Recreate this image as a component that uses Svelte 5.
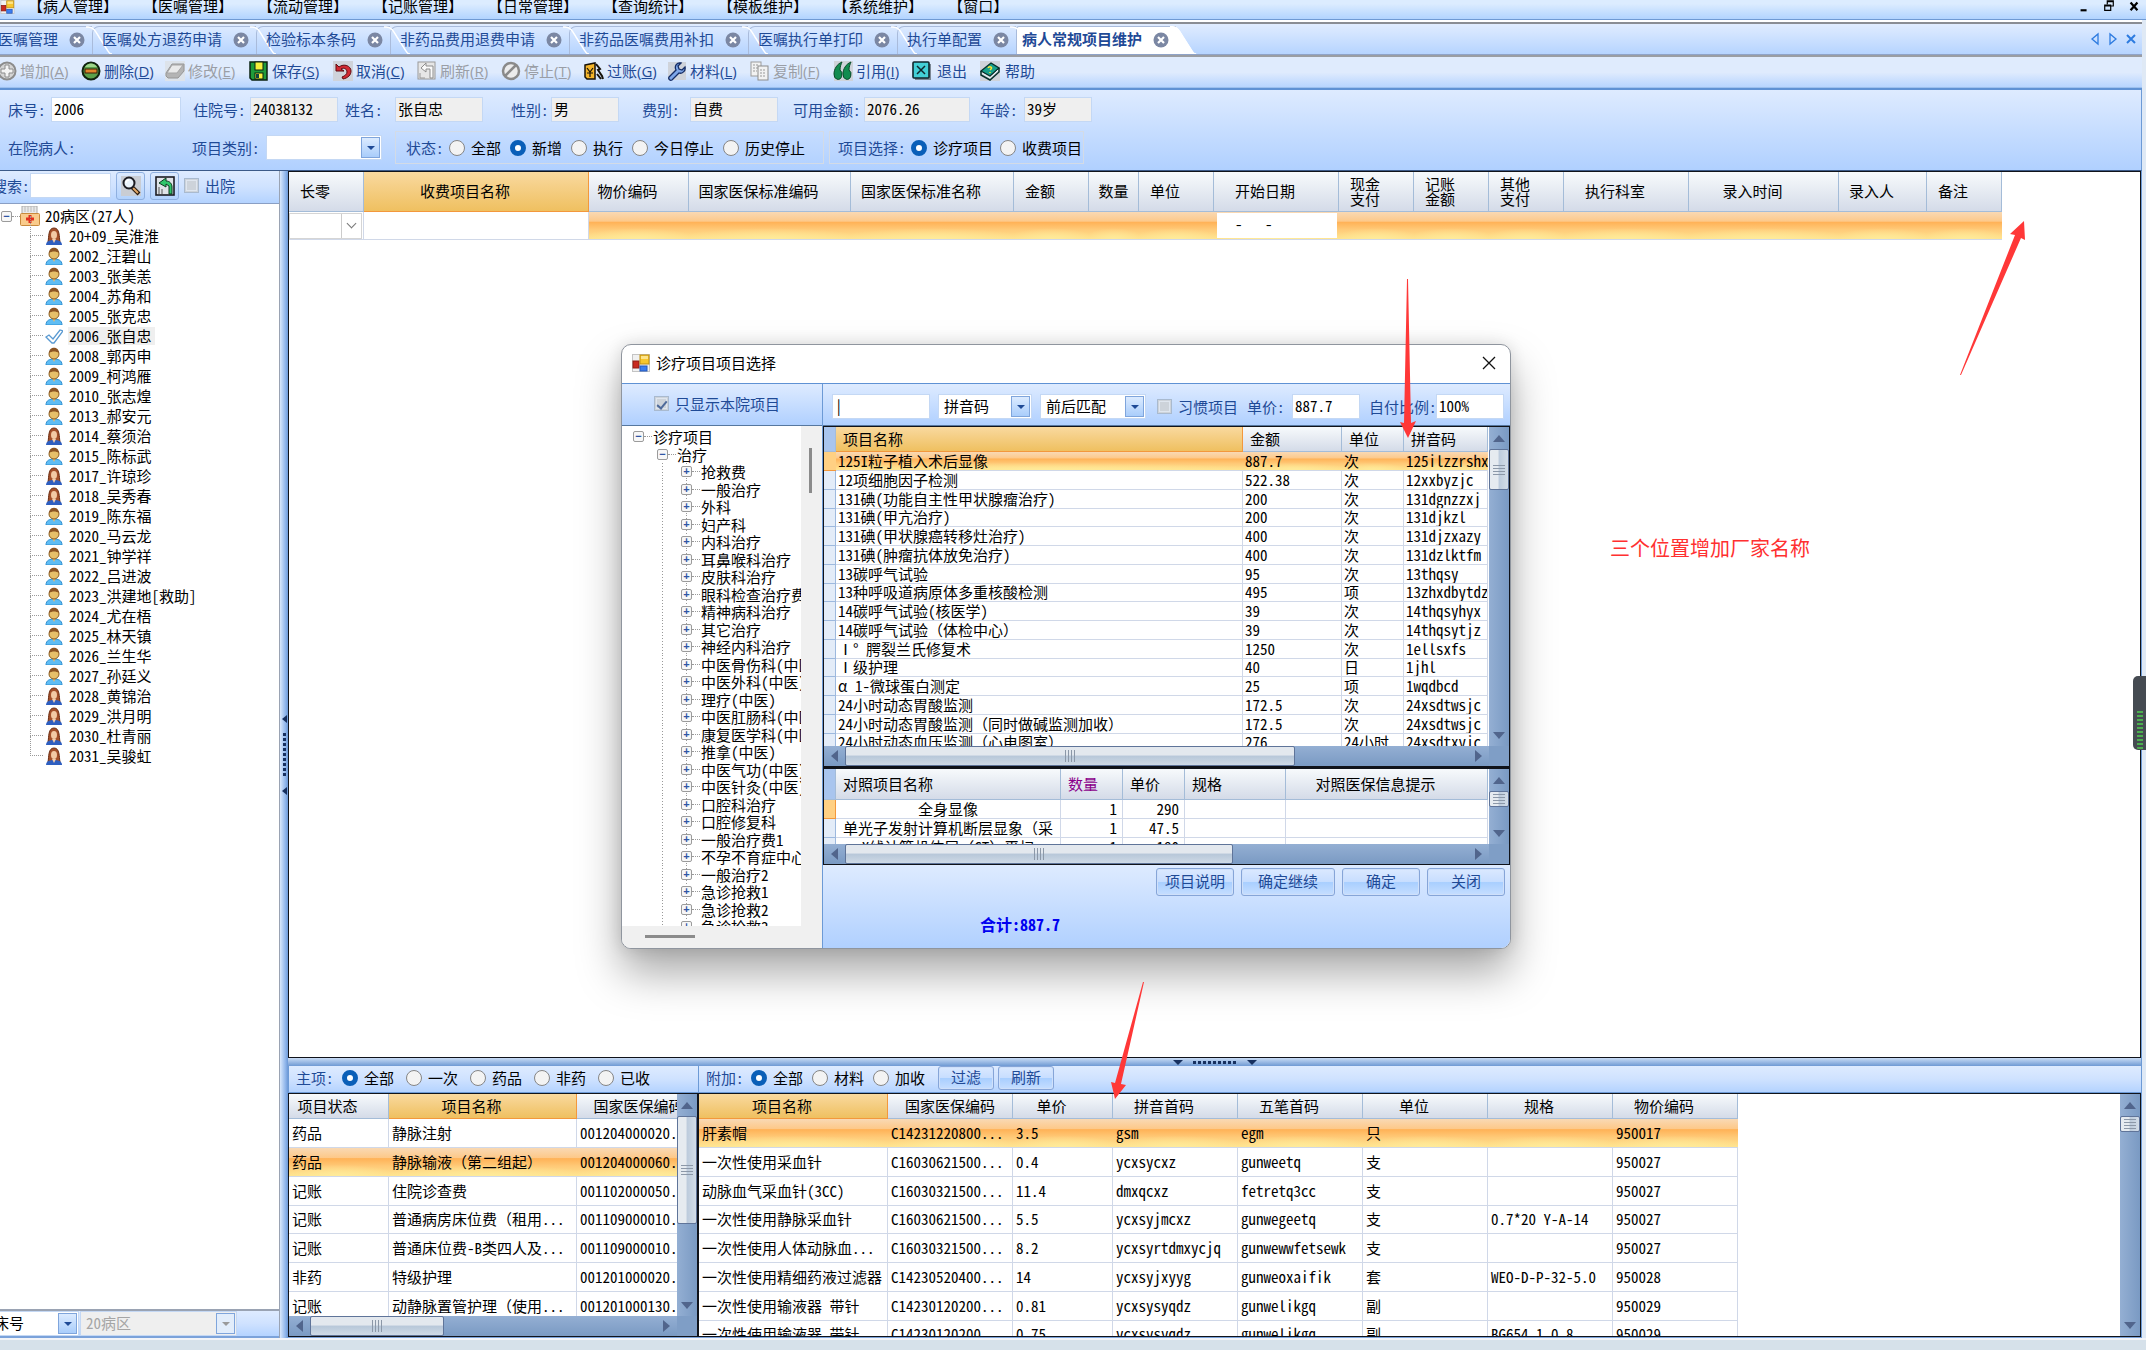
<script lang="ts">
	interface Column {
		title: string;
		width: number;
		align?: string;
		active?: boolean;
	}

	const menus = ['病人管理', '医嘱管理', '流动管理', '记账管理', '日常管理', '查询统计', '模板维护', '系统维护', '窗口'];

	const tabs = [
		'医嘱管理',
		'医嘱处方退药申请',
		'检验标本条码',
		'非药品费用退费申请',
		'非药品医嘱费用补扣',
		'医嘱执行单打印',
		'执行单配置',
		'病人常规项目维护'
	];
	let activeTab = $state('病人常规项目维护');

	const tools = [
		{ icon: 'add', text: '增加', key: 'A', disabled: true },
		{ icon: 'remove', text: '删除', key: 'D' },
		{ icon: 'edit', text: '修改', key: 'E', disabled: true },
		{ icon: 'save', text: '保存', key: 'S' },
		{ icon: 'undo', text: '取消', key: 'C' },
		{ icon: 'refresh', text: '刷新', key: 'R', disabled: true },
		{ icon: 'stop', text: '停止', key: 'T', disabled: true },
		{ icon: 'post', text: '过账', key: 'G' },
		{ icon: 'wrench', text: '材料', key: 'L' },
		{ icon: 'copy', text: '复制', key: 'F', disabled: true },
		{ icon: 'quote', text: '引用', key: 'I' },
		{ icon: 'exit', text: '退出' },
		{ icon: 'help', text: '帮助' }
	];

	const fields = [
		{ label: '床号:', value: '2006', size: 'xl' },
		{ label: '住院号:', value: '24038132', size: 'md', readonly: true },
		{ label: '姓名:', value: '张自忠', size: 'md', readonly: true },
		{ label: '性别:', value: '男', size: 'sm', readonly: true },
		{ label: '费别:', value: '自费', size: 'md', readonly: true },
		{ label: '可用金额:', value: '2076.26', size: 'lg', readonly: true },
		{ label: '年龄:', value: '39岁', size: 'sm', readonly: true }
	];

	// f = female, m = male, c = currently selected
	const patients = [
		['20+09_吴淮淮', 'f'],
		['2002_汪碧山', 'm'],
		['2003_张美恙', 'm'],
		['2004_苏角和', 'm'],
		['2005_张克忠', 'm'],
		['2006_张自忠', 'c'],
		['2008_郭丙申', 'm'],
		['2009_柯鸿雁', 'm'],
		['2010_张志煌', 'm'],
		['2013_郝安元', 'm'],
		['2014_蔡须治', 'f'],
		['2015_陈标武', 'm'],
		['2017_许琼珍', 'f'],
		['2018_吴秀春', 'f'],
		['2019_陈东福', 'm'],
		['2020_马云龙', 'm'],
		['2021_钟学祥', 'm'],
		['2022_吕进波', 'm'],
		['2023_洪建地[救助]', 'm'],
		['2024_尤在梧', 'm'],
		['2025_林天镇', 'm'],
		['2026_兰生华', 'm'],
		['2027_孙廷义', 'm'],
		['2028_黄锦治', 'f'],
		['2029_洪月明', 'f'],
		['2030_杜青丽', 'f'],
		['2031_吴骏虹', 'f']
	];

	const chargeColumns: Column[] = [
		{ title: '长零', width: 75 },
		{ title: '收费项目名称', width: 225, active: true },
		{ title: '物价编码', width: 100 },
		{ title: '国家医保标准编码', width: 162 },
		{ title: '国家医保标准名称', width: 163 },
		{ title: '金额', width: 75 },
		{ title: '数量', width: 50, align: 'tight' },
		{ title: '单位', width: 75 },
		{ title: '开始日期', width: 125 },
		{ title: '现金\n支付', width: 75 },
		{ title: '记账\n金额', width: 75 },
		{ title: '其他\n支付', width: 75 },
		{ title: '执行科室', width: 125 },
		{ title: '录入时间', width: 150 },
		{ title: '录入人', width: 88 },
		{ title: '备注', width: 75 }
	];

	const mainColumns: Column[] = [
		{ title: '项目状态', width: 100 },
		{ title: '项目名称', width: 188, active: true },
		{ title: '国家医保编码', width: 146 }
	];
	const mainRows = [
		['药品', '静脉注射', '001204000020...'],
		['药品', '静脉输液（第二组起）', '001204000060...'],
		['记账', '住院诊查费', '001102000050...'],
		['记账', '普通病房床位费（租用...', '001109000010...'],
		['记账', '普通床位费-B类四人及...', '001109000010...'],
		['非药', '特级护理', '001201000020...'],
		['记账', '动静脉置管护理（使用...', '001201000130...']
	];

	const extraColumns: Column[] = [
		{ title: '项目名称', width: 189, active: true },
		{ title: '国家医保编码', width: 125, align: 'tight' },
		{ title: '单价', width: 100 },
		{ title: '拼音首码', width: 125 },
		{ title: '五笔首码', width: 125 },
		{ title: '单位', width: 125 },
		{ title: '规格', width: 125 },
		{ title: '物价编码', width: 125 }
	];
	const extraRows = [
		['肝素帽', 'C14231220800...', '3.5', 'gsm', 'egm', '只', '', '950017'],
		['一次性使用采血针', 'C16030621500...', '0.4', 'ycxsycxz', 'gunweetq', '支', '', '950027'],
		['动脉血气采血针(3CC)', 'C16030321500...', '11.4', 'dmxqcxz', 'fetretq3cc', '支', '', '950027'],
		['一次性使用静脉采血针', 'C16030621500...', '5.5', 'ycxsyjmcxz', 'gunwegeetq', '支', '0.7*20 Y-A-14', '950027'],
		['一次性使用人体动脉血...', 'C16030321500...', '8.2', 'ycxsyrtdmxycjq', 'gunwewwfetsewk', '支', '', '950027'],
		['一次性使用精细药液过滤器', 'C14230520400...', '14', 'ycxsyjxyyg', 'gunweoxaifik', '套', 'WEO-D-P-32-5.0', '950028'],
		['一次性使用输液器 带针', 'C14230120200...', '0.81', 'ycxsysyqdz', 'gunwelikgq', '副', '', '950029'],
		['一次性使用输液器 带针', 'C14230120200...', '0.75', 'ycxsysyqdz', 'gunwelikgq', '副', 'BG654 1.0 8', '950029']
	];

	const categories = [
		'抢救费', '一般治疗', '外科', '妇产科', '内科治疗', '耳鼻喉科治疗', '皮肤科治疗', '眼科检查治疗费',
		'精神病科治疗', '其它治疗', '神经内科治疗', '中医骨伤科(中医)', '中医外科(中医)', '理疗(中医)',
		'中医肛肠科(中医)', '康复医学科(中医)', '推拿(中医)', '中医气功(中医)', '中医针灸(中医)', '口腔科治疗',
		'口腔修复科', '一般治疗费1', '不孕不育症中心', '一般治疗2', '急诊抢救1', '急诊抢救2', '急诊抢救3'
	];

	const itemColumns: Column[] = [
		{ title: '', width: 12, align: 'select' },
		{ title: '项目名称', width: 407, align: 'left', active: true },
		{ title: '金额', width: 99, align: 'left' },
		{ title: '单位', width: 62, align: 'left' },
		{ title: '拼音码', width: 84, align: 'left' }
	];
	const itemRows = [
		['', '125I粒子植入术后显像', '887.7', '次', '125ilzzrshx'],
		['', '12项细胞因子检测', '522.38', '次', '12xxbyzjc'],
		['', '131碘(功能自主性甲状腺瘤治疗)', '200', '次', '131dgnzzxj'],
		['', '131碘(甲亢治疗)', '200', '次', '131djkzl'],
		['', '131碘(甲状腺癌转移灶治疗)', '400', '次', '131djzxazy'],
		['', '131碘(肿瘤抗体放免治疗)', '400', '次', '131dzlktfm'],
		['', '13碳呼气试验', '95', '次', '13thqsy'],
		['', '13种呼吸道病原体多重核酸检测', '495', '项', '13zhxdbytdz'],
		['', '14碳呼气试验(核医学)', '39', '次', '14thqsyhyx'],
		['', '14碳呼气试验（体检中心）', '39', '次', '14thqsytjz'],
		['', 'Ⅰ° 腭裂兰氏修复术', '1250', '次', '1ellsxfs'],
		['', 'Ⅰ级护理', '40', '日', '1jhl'],
		['', 'α 1-微球蛋白测定', '25', '项', '1wqdbcd'],
		['', '24小时动态胃酸监测', '172.5', '次', '24xsdtwsjc'],
		['', '24小时动态胃酸监测（同时做碱监测加收）', '172.5', '次', '24xsdtwsjc'],
		['', '24小时动态血压监测（心电图室）', '276', '24小时', '24xsdtxyjc']
	];

	const compareColumns: Column[] = [
		{ title: '', width: 12, align: 'select' },
		{ title: '对照项目名称', width: 225, align: 'left' },
		{ title: '数量', width: 62, align: 'left' },
		{ title: '单价', width: 62, align: 'left' },
		{ title: '规格', width: 101, align: 'left' },
		{ title: '对照医保信息提示', width: 202 }
	];
	const compareRows = [
		['', '全身显像', '1', '290', '', ''],
		['', '单光子发射计算机断层显象（采', '1', '47.5', '', ''],
		['', 'X线计算机体层（CT）平扫', '1', '180', '', '']
	];

	let status = $state('新增');
	let itemKind = $state('诊疗项目');
	let mainFilter = $state('全部');
	let extraFilter = $state('全部');
	let dialogOpen = $state(true);
</script>

{#snippet appIcon()}
	<svg class="app-icon" viewBox="0 0 18 18" aria-hidden="true">
		<rect x="0.5" y="0.5" width="17" height="17" fill="#f1f1f1" stroke="#c4c4c4" />
		<rect x="1" y="7" width="6" height="7" fill="#c9291f" stroke="#8f1c14" />
		<rect x="8" y="1" width="9" height="9" fill="#f8c62c" stroke="#c08f12" />
		<path d="M9 2h7v3H9z" fill="#fde48a" />
		<rect x="8" y="12" width="7" height="5" fill="#3c7df0" stroke="#2458b8" />
	</svg>
{/snippet}

{#snippet toolIcon(name: string)}
	<svg class="tool-icon" viewBox="0 0 20 20" aria-hidden="true">
		{#if name === 'add'}
			<circle cx="10" cy="10" r="8.5" fill="#d5d5d5" stroke="#8c8c8c" stroke-width="2" />
			<path d="M8 4h4v4h4v4h-4v4H8v-4H4V8h4z" fill="#f4f4f4" stroke="#8c8c8c" />
		{:else if name === 'remove'}
			<circle cx="10" cy="10" r="8.5" fill="#5aa14a" stroke="#10220e" stroke-width="2" />
			<path d="M4 6a7 7 0 0 1 12 0z" fill="#9fd68b" />
			<rect x="4" y="8" width="12" height="4" fill="#e0862c" stroke="#3d1d05" />
		{:else if name === 'edit'}
			<rect width="20" height="20" fill="#dde3ea" />
			<path d="M1 12L7 3h12v7l-6 7H3l-2-2z" fill="#b4b4b4" stroke="#969696" />
			<path d="M2 12L7 4h11l-6 8z" fill="#e9e9e9" stroke="#a5a5a5" />
		{:else if name === 'save'}
			<path d="M1 1h17v18H3l-2-2z" fill="#1f9c3a" stroke="#0a2210" stroke-width="1.5" />
			<rect x="6" y="1" width="8" height="8" fill="#f7f23c" stroke="#0a2210" />
			<rect x="6" y="12" width="8" height="6" fill="#f7f23c" stroke="#0a2210" />
			<rect x="7" y="13" width="3" height="4" fill="#144" />
		{:else if name === 'undo'}
			<rect width="20" height="20" fill="#cfd3da" />
			<path d="M3 3v7h8L8 8c3-2 6 0 6 3 0 2-2 4-5 5l1 2c5-1 8-4 8-8 0-5-7-8-12-4z" fill="#d22a33" stroke="#5e0a10" />
		{:else if name === 'refresh'}
			<rect x="1" y="1" width="17" height="17" fill="#e6e6e6" stroke="#9a9a9a" />
			<path d="M13 17V8H9v3L4 7l5-5v3h7v12z" fill="#fafafa" stroke="#8d8d8d" />
			<path d="M3 12v5h5" fill="none" stroke="#999" />
		{:else if name === 'stop'}
			<circle cx="10" cy="10" r="8" fill="#ececec" stroke="#8a8a8a" stroke-width="2.5" />
			<path d="M4 15L15 4" stroke="#8a8a8a" stroke-width="2.5" />
		{:else if name === 'post'}
			<path d="M1 4l10-2v16H3l-2-2z" fill="#f5b52a" stroke="#17120a" stroke-width="1.5" />
			<path d="M3 7l3 4 3-4M6 11v5M3 12h6" fill="none" stroke="#17120a" stroke-width="1.2" />
			<path d="M12 3l4 5-2 1 4 6 1 3M13 13l4 5" fill="none" stroke="#17120a" stroke-width="2" />
		{:else if name === 'wrench'}
			<rect x="1" y="1" width="18" height="18" fill="#cfd3da" />
			<path d="M2 16L9 9C7 5 10 1 14 2l-3 3 1 3 3 1 3-3c1 4-3 7-6 6l-7 7c-2 1-4-1-3-3z" fill="#7ea6e8" stroke="#152d66" stroke-width="1.3" />
		{:else if name === 'copy'}
			<rect x="1" y="1" width="10" height="14" fill="#f2f2f2" stroke="#9c9c9c" />
			<rect x="8" y="5" width="10" height="14" fill="#f2f2f2" stroke="#8c8c8c" />
			<path d="M3 4h5M3 7h5M3 10h4M10 9h6M10 12h6M10 15h6" stroke="#999" stroke-dasharray="2 1" />
		{:else if name === 'quote'}
			<rect x="1" width="19" height="20" fill="#cfd3da" />
			<path d="M9 1C4 3 1 8 1 13a4 5 0 1 0 6-4C7 6 8 3 9 1z" fill="#128c50" stroke="#0a4a2a" />
			<path d="M18 1c-5 2-8 7-8 12a4 5 0 1 0 6-4c0-3 1-6 2-8z" fill="#128c50" stroke="#0a4a2a" />
		{:else if name === 'exit'}
			<rect x="3" y="3" width="16" height="16" fill="#7b8794" />
			<rect x="1" y="1" width="16" height="16" rx="1" fill="#43cfd6" stroke="#10262c" stroke-width="1.6" />
			<path d="M5 5l8 8M13 5l-8 8" stroke="#10262c" stroke-width="1.5" />
		{:else}
			<rect width="20" height="20" fill="#cfd3da" />
			<path d="M1 10L11 2l8 5-9 8z" fill="#18a08a" stroke="#07302a" stroke-width="1.3" />
			<path d="M1 10v4l9 5 9-8V7" fill="none" stroke="#07302a" stroke-width="1.5" />
			<path d="M2 12l8 5 8-8" fill="none" stroke="#e8f6f4" />
			<path d="M8 7c1-2 5-1 3 1l-1 1M10 11v1" fill="none" stroke="#ffe62e" stroke-width="1.5" />
		{/if}
	</svg>
{/snippet}

{#snippet person(kind: string)}
	<svg class="person" viewBox="0 0 18 18" aria-hidden="true">
		{#if kind === 'f'}
			<path d="M3 15C4 10 3 1 9 1s5 9 6 14z" fill="#a4502a" stroke="#6d2d12" />
			<path d="M1 18c0-4 4-5 8-5s8 1 8 5z" fill="#2f5fc0" />
			<path d="M7 12h4l-2 4z" fill="#f5cfae" />
			<ellipse cx="9" cy="8" rx="3" ry="4" fill="#f3c9a4" />
		{:else if kind === 'm'}
			<path d="M1 18c0-5 4-6 8-6s8 1 8 6z" fill="#5fbdf4" stroke="#2f8fd0" />
			<path d="M7 11h4l-2 4z" fill="#e8bb6d" />
			<circle cx="9" cy="7" r="5" fill="#e6c06a" stroke="#8a5a1c" />
			<path d="M4 6c0-7 10-7 10 0-3-2-7-2-10 0z" fill="#8b5423" />
		{:else}
			<path d="M1 10l3-2 4 4 7-9 3 1-9 12H7z" fill="#fff" stroke="#5a9ad2" stroke-width="1.3" />
		{/if}
	</svg>
{/snippet}

{#snippet vscroll(size: number)}
	<div class="vscroll" aria-hidden="true">
		<span class="arrow arrow--up"></span>
		<span class="thumb thumb--v" style:height="{size}px"><i></i></span>
		<span class="arrow arrow--down"></span>
	</div>
{/snippet}

{#snippet hscroll(size: number)}
	<div class="hscroll" aria-hidden="true">
		<span class="arrow arrow--left"></span>
		<span class="thumb thumb--h" style:width="{size}px"><i></i></span>
		<span class="arrow arrow--right"></span>
	</div>
{/snippet}

{#snippet grid(name: string, columns: Column[], rows: string[][], selected: number)}
	<table class="grid grid--{name}">
		<colgroup>
			{#each columns as col}
				<col style:width="{col.width}px" />
			{/each}
		</colgroup>
		<thead>
			<tr>
				{#each columns as col}
					<th class={col.align ?? 'center'} class:active={col.active}>{col.title}</th>
				{/each}
			</tr>
		</thead>
		<tbody>
			{#each rows as row, i}
				<tr class:selected={i === selected}>
					{#each row as cell}
						<td>{cell}</td>
					{/each}
				</tr>
			{/each}
		</tbody>
	</table>
{/snippet}

{#snippet combo(label: string, value: string, cls: string, disabled: boolean)}
	<div class="combo combo--{cls}" class:combo--disabled={disabled}>
		<select aria-label={label} {disabled}>
			<option>{value}</option>
		</select>
		<span class="combo__button" aria-hidden="true"></span>
	</div>
{/snippet}

<div class="app">
	<header class="menubar">
		{@render appIcon()}
		<nav>
			{#each menus as menu}
				<button type="button">【{menu}】</button>
			{/each}
		</nav>
		<div class="menubar__controls">
			<button type="button" aria-label="最小化"><svg viewBox="0 0 12 14"><path d="M2 12h7" stroke="#000" stroke-width="2.5" /></svg></button>
			<button type="button" aria-label="还原">
				<svg viewBox="0 0 12 14"><path d="M4 5V1h7v6H8M4 2h7M1 6h7v6H1zM1 7h7" fill="none" stroke="#000" stroke-width="1.4" /></svg>
			</button>
			<button type="button" aria-label="关闭"><svg viewBox="0 0 12 14"><path d="M2 3l8 9M10 3l-8 9" stroke="#000" stroke-width="2.6" /></svg></button>
		</div>
	</header>

	<div class="tabs">
		{#each tabs as tab}
			<div class="tab" class:tab--active={tab === activeTab}>
				<svg class="tab__edge" viewBox="0 0 28 28" aria-hidden="true">
					<path class="tab__fill" d="M0 0h2c6 0 8 5 11 10l9 14c2 3 3 4 6 4H0z" />
					<path class="tab__line" d="M0 1h2c6 0 8 5 11 10l9 14c1 2 2 3 4 3" fill="none" />
				</svg>
				<button type="button" class="tab__name" onclick={() => (activeTab = tab)}>{tab}</button>
				<button type="button" class="tab__close" aria-label="关闭{tab}">
					<svg viewBox="0 0 16 16">
						<circle cx="8" cy="8" r="7.5" fill="#7b87a3" />
						<path d="M5 5l6 6M11 5l-6 6" stroke="#fff" stroke-width="2.2" />
					</svg>
				</button>
			</div>
		{/each}
		<div class="tabs__nav">
			<button type="button" aria-label="上一个"><svg viewBox="0 0 10 14"><path d="M8 2v10L2 7z" fill="none" stroke="#2d7be0" stroke-width="1.3" /></svg></button>
			<button type="button" aria-label="下一个"><svg viewBox="0 0 10 14"><path d="M2 2v10l6-5z" fill="none" stroke="#2d7be0" stroke-width="1.3" /></svg></button>
			<button type="button" aria-label="关闭标签"><svg viewBox="0 0 10 14"><path d="M1 3l8 8M9 3l-8 8" stroke="#2d7be0" stroke-width="2" /></svg></button>
		</div>
	</div>

	<div class="toolbar">
		{#each tools as tool}
			<button type="button" class="tool" disabled={tool.disabled}>
				{@render toolIcon(tool.icon)}
				<span>{tool.text}{#if tool.key}(<u>{tool.key}</u>){/if}</span>
			</button>
		{/each}
	</div>

	<section class="filters">
		<div class="filters__patient">
			{#each fields as field, i}
				<label for="field-{i}">{field.label}</label>
				<input id="field-{i}" class="box box--{field.size}" value={field.value} readonly={field.readonly} />
			{/each}
		</div>
		<div class="filters__options">
			<span class="caption caption--patient">在院病人:</span>
			<span class="caption caption--kind">项目类别:</span>
			{@render combo('项目类别', '', 'kind', false)}
			<div class="group group--status" role="radiogroup" aria-label="状态">
				<span class="caption">状态:</span>
				{#each ['全部', '新增', '执行', '今日停止', '历史停止'] as option}
					<label class="radio"><input type="radio" name="status" value={option} bind:group={status} />{option}</label>
				{/each}
			</div>
			<div class="group group--item" role="radiogroup" aria-label="项目选择">
				<span class="caption">项目选择:</span>
				{#each ['诊疗项目', '收费项目'] as option}
					<label class="radio"><input type="radio" name="kind" value={option} bind:group={itemKind} />{option}</label>
				{/each}
			</div>
		</div>
	</section>

	<main class="body">
		<aside class="sidebar">
			<div class="search">
				<label for="search">搜索:</label>
				<input id="search" class="box" />
				<button type="button" class="push" aria-label="查找">
					<svg viewBox="0 0 20 20">
						<rect width="20" height="20" fill="#c9cdd4" />
						<path d="M11 11l7 7" stroke="#2a1c10" stroke-width="4" />
						<path d="M12 12l5 5" stroke="#e2a868" stroke-width="2" />
						<circle cx="8" cy="7" r="5.5" fill="#eaf3fb" stroke="#1c1c22" stroke-width="2" />
						<path d="M5 7c0-2 1-3 3-3" fill="none" stroke="#fff" stroke-width="1.5" />
					</svg>
				</button>
				<button type="button" class="push" aria-label="刷新">
					<svg viewBox="0 0 20 20">
						<rect x="1" y="1" width="18" height="18" fill="#dfe3e8" stroke="#1c1c22" stroke-width="1.6" />
						<path d="M14 18v-8l-3-2v3L4 7l7-5v3c4 0 6 3 6 6v7z" fill="#2fc56a" stroke="#0c3a1f" />
						<path d="M4 11v7M7 13v5" stroke="#555" />
					</svg>
				</button>
				<label class="check"><input type="checkbox" />出院</label>
			</div>
			<div class="patients">
				<div class="patients__root">
					<span class="toggle">−</span>
					<i class="dots"></i>
					<svg class="ward" viewBox="0 0 20 20" aria-hidden="true">
						<path d="M2 0h15v10H2z" fill="#e9e9e9" stroke="#aaa" />
						<path d="M5 0v6M8 0v6M11 0v6M14 0v6" stroke="#bbb" />
						<rect x="0.5" y="7.5" width="19" height="12" rx="1" fill="#f9cb8c" stroke="#c98a3c" />
						<path d="M10 9v8M6 13h8" stroke="#e0301e" stroke-width="3" />
					</svg>
					<span>20病区(27人)</span>
				</div>
				<ul>
					{#each patients as [name, kind]}
						<li>
							<i class="branch"></i>
							{@render person(kind)}
							<span class:current={kind === 'c'}>{name}</span>
						</li>
					{/each}
				</ul>
			</div>
			<div class="sidebar__foot">
				{@render combo('排序', '床号', 'bed', false)}
				{@render combo('病区', '20病区', 'ward', true)}
			</div>
		</aside>

		<div class="split split--v" aria-hidden="true"><i></i><b></b><i></i></div>

		<div class="work">
			<div class="charges">
				<table class="grid grid--charge">
					<colgroup>
						{#each chargeColumns as col}
							<col style:width="{col.width}px" />
						{/each}
					</colgroup>
					<thead>
						<tr>
							{#each chargeColumns as col}
								<th class={col.align ?? 'center'} class:active={col.active}>{col.title}</th>
							{/each}
						</tr>
					</thead>
					<tbody>
						<tr class="selected">
							<td class="editor">{@render combo('长零', '', 'cell', false)}</td>
							<td class="editor"></td>
							{#each chargeColumns.slice(2) as col}
								<td>
									{#if col.title === '开始日期'}
										<input class="date" aria-label="开始日期" value="-   -" />
									{/if}
								</td>
							{/each}
						</tr>
					</tbody>
				</table>
			</div>

			<div class="split split--h" aria-hidden="true"><i></i><b></b><i></i></div>

			<div class="lower">
				<section class="pane pane--main">
					<div class="pane__bar" role="radiogroup" aria-label="主项">
						<span class="caption">主项:</span>
						{#each ['全部', '一次', '药品', '非药', '已收'] as option}
							<label class="radio"><input type="radio" name="main" value={option} bind:group={mainFilter} />{option}</label>
						{/each}
					</div>
					<div class="scroller">
						<div class="scroller__view">{@render grid('lower', mainColumns, mainRows, 1)}</div>
						{@render vscroll(108)}
						{@render hscroll(134)}
						<div class="corner"></div>
					</div>
				</section>
				<section class="pane pane--extra">
					<div class="pane__bar">
						<span class="caption">附加:</span>
						{#each ['全部', '材料', '加收'] as option}
							<label class="radio"><input type="radio" name="extra" value={option} bind:group={extraFilter} />{option}</label>
						{/each}
						<div class="pane__buttons">
							<button type="button" class="button button--small">过滤</button>
							<button type="button" class="button button--small">刷新</button>
						</div>
					</div>
					<div class="scroller scroller--tall">
						<div class="scroller__view">{@render grid('lower', extraColumns, extraRows, 0)}</div>
						{@render vscroll(16)}
					</div>
				</section>
			</div>
		</div>
	</main>

	<footer class="taskbar"></footer>

	{#if dialogOpen}
		<div class="dialog" role="dialog" aria-label="诊疗项目项目选择">
			<div class="dialog__title">
				{@render appIcon()}
				<span>诊疗项目项目选择</span>
				<button type="button" aria-label="关闭" onclick={() => (dialogOpen = false)}>
					<svg viewBox="0 0 14 14"><path d="M1 1l12 12M13 1L1 13" stroke="#111" stroke-width="1.3" /></svg>
				</button>
			</div>
			<div class="dialog__body">
				<div class="dialog__left">
					<div class="dialog__bar dialog__bar--left">
						<label class="check"><input type="checkbox" checked />只显示本院项目</label>
					</div>
					<div class="tree">
						<ul>
							<li class="tree__root"><span class="toggle">−</span><i class="dots"></i>诊疗项目</li>
							<li class="tree__branch"><span class="toggle">−</span><i class="dots"></i>治疗</li>
							{#each categories as category}
								<li class="tree__leaf"><span class="toggle">+</span><i class="dots"></i>{category}</li>
							{/each}
						</ul>
						<div class="tree__vbar"><i></i></div>
						<div class="tree__hbar"><i></i></div>
					</div>
				</div>
				<div class="dialog__right">
					<div class="dialog__bar">
						<input class="box box--query" aria-label="查询" value="|" />
						{@render combo('编码', '拼音码', 'code', false)}
						{@render combo('匹配方式', '前后匹配', 'match', false)}
						<label class="check check--habit"><input type="checkbox" />习惯项目</label>
						<label class="caption--price" for="price">单价:</label>
						<input id="price" class="box box--sm" value="887.7" />
						<label class="caption--ratio" for="ratio">自付比例:</label>
						<input id="ratio" class="box box--sm" value="100%" />
					</div>
					<div class="scroller scroller--items">
						<div class="scroller__view">{@render grid('item', itemColumns, itemRows, 0)}</div>
						{@render vscroll(41)}
						{@render hscroll(450)}
						<div class="corner"></div>
					</div>
					<div class="scroller scroller--compare">
						<div class="scroller__view">{@render grid('compare', compareColumns, compareRows, -1)}</div>
						{@render vscroll(16)}
						{@render hscroll(388)}
						<div class="corner"></div>
					</div>
					<div class="dialog__foot">
						<div class="dialog__buttons">
							<button type="button" class="button">项目说明</button>
							<button type="button" class="button button--wide">确定继续</button>
							<button type="button" class="button">确定</button>
							<button type="button" class="button" onclick={() => (dialogOpen = false)}>关闭</button>
						</div>
						<strong>合计:887.7</strong>
					</div>
				</div>
			</div>
		</div>
	{/if}

	<svg class="marks" viewBox="0 0 2146 1350" aria-hidden="true">
		<path d="M1960 375L2015 235L2010 234L2024 221L2025 240L2021 238L1961 375z" />
		<path d="M1407 279L1404 423L1400 422L1408 438L1416 421L1411 423L1408 279z" />
		<path d="M1143 982L1115 1083L1111 1082L1115 1099L1126 1085L1121 1084L1144 982z" />
	</svg>
	<p class="note">三个位置增加厂家名称</p>
	<div class="gauge" aria-hidden="true"></div>
</div>

<style>
	:global(body) {
		margin: 0;
		background: #d6e1ea;
	}

	.app {
		--ui: 'Noto Sans Mono CJK SC', 'Liberation Serif', 'Noto Sans CJK SC', serif;
		--sans: 'Open Sans', 'Noto Sans CJK SC', sans-serif;
		--blue: #1f4a96;
		--line: #6c9ad6;
		--bar: linear-gradient(#deebff, #cfe2ff 50%, #b4d3ff);
		position: relative;
		display: flex;
		flex-direction: column;
		height: 100vh;
		overflow: hidden;
		background: #dfe9f5;
		color: #000;
		font: 15px/18px var(--ui);
		white-space: nowrap;
	}

	button,
	input,
	select {
		font: inherit;
		color: inherit;
		margin: 0;
		padding: 0;
		border: 0;
		background: none;
		box-sizing: border-box;
		border-radius: 0;
	}

	svg {
		display: block;
	}

	ul {
		list-style: none;
		margin: 0;
		padding: 0;
	}

	/* menu bar */
	.menubar {
		flex: none;
		display: flex;
		align-items: center;
		box-sizing: border-box;
		height: 20px;
		padding-right: 6px;
		border-bottom: 1px solid #6f9ad4;
		background: linear-gradient(#dcecff 20%, #b2d4ff);
		line-height: 12px;
	}

	.menubar nav {
		flex: 1;
		display: flex;
		gap: 25px;
		align-self: flex-start;
		margin-left: 13px;
	}

	.menubar__controls {
		display: flex;
		gap: 13px;
		align-self: flex-start;
	}

	.menubar__controls svg {
		width: 12px;
		height: 12px;
	}

	.app-icon {
		width: 18px;
		height: 18px;
	}

	.menubar .app-icon {
		width: 15px;
		height: 14px;
		align-self: flex-start;
	}

	/* document tabs */
	.tabs {
		flex: none;
		display: flex;
		height: 30px;
		margin: 2px 4px 0 0;
		border-top: 2px solid #8a8d94;
		border-bottom: 1px solid #8fa3c8;
		background: linear-gradient(#e0ecff, #b6d4ff);
		box-sizing: content-box;
		box-shadow: 0 -2px #fff;
	}

	.tab {
		position: relative;
		display: flex;
		align-items: center;
		box-sizing: border-box;
		height: 28px;
		margin-top: 2px;
		padding: 0 7px 4px 9px;
		gap: 11px;
		border: solid #a9bbdb;
		border-width: 1px 0 0 1px;
		border-radius: 7px 0 0 0;
		color: var(--blue);
	}

	.tab:first-child {
		margin-left: -12px;
	}

	.tab__edge {
		position: absolute;
		top: -1px;
		right: -22px;
		width: 28px;
		height: 28px;
		z-index: 1;
	}

	.tab__fill {
		fill: none;
	}

	.tab__line {
		stroke: #fff;
		stroke-width: 1.5;
	}

	.tab--active {
		background: #fff;
		padding-left: 5px;
		font-weight: bold;
		border-radius: 3px 0 0 0;
	}

	.tab--active .tab__fill {
		fill: #fff;
	}

	.tab__name {
		z-index: 2;
	}

	.tab__close {
		z-index: 2;
		padding-top: 2px;
	}

	.tab__close svg {
		width: 16px;
		height: 16px;
	}

	.tabs__nav {
		display: flex;
		gap: 8px;
		margin-left: auto;
		padding-right: 6px;
	}

	.tabs__nav svg {
		width: 10px;
		height: 14px;
	}

	/* toolbar */
	.toolbar {
		flex: none;
		display: flex;
		box-sizing: border-box;
		height: 35px;
		margin-right: 4px;
		padding-bottom: 3px;
		border-top: 2px solid #9a9da3;
		border-bottom: 2px solid #5f92d4;
		background: linear-gradient(#dfebfd 50%, #b4d3ff);
		box-shadow: inset 0 -1px #9cc0ee;
	}

	.tool {
		display: flex;
		align-items: center;
		gap: 3px;
		width: 84px;
		flex: none;
		color: var(--blue);
		font-family: var(--sans);
	}

	.tool:first-child {
		margin-left: -3px;
	}

	.tool:nth-child(n + 7) {
		width: 83px;
	}

	.tool:nth-child(n + 11) {
		width: 79px;
	}

	.tool:nth-child(n + 12) {
		width: 68px;
		gap: 5px;
	}

	.tool:disabled {
		color: #9a9ea6;
	}

	.tool-icon {
		width: 20px;
		height: 20px;
	}

	/* patient filters */
	.filters {
		flex: none;
		display: flex;
		flex-direction: column;
		gap: 9px;
		box-sizing: border-box;
		height: 81px;
		margin-right: 4px;
		padding: 7px 0 5px 8px;
		border-right: 1px solid var(--line);
		border-bottom: 1px solid #3c5a88;
		background: linear-gradient(#deebff, #b0d0ff);
		color: var(--blue);
	}

	.filters__patient {
		display: grid;
		grid-template-columns: 43px 142px 57px 95px 50px 116px 40px 91px 48px 103px 71px 116px 44px 68px;
		align-items: center;
	}

	.filters__options {
		display: flex;
		align-items: center;
	}

	.box {
		height: 25px;
		padding: 0 2px 2px;
		border: 1px solid #c4d8f4;
		background: #fff;
		color: #000;
	}

	.box:read-only {
		background: #efefef;
	}

	.box--sm {
		width: 68px;
	}

	.box--md {
		width: 88px;
	}

	.box--lg {
		width: 106px;
	}

	.box--xl {
		width: 130px;
	}

	.caption {
		color: var(--blue);
	}

	.caption--patient {
		width: 184px;
	}

	.caption--kind {
		width: 74px;
	}

	.combo {
		display: flex;
		align-items: center;
		box-sizing: border-box;
		height: 25px;
		padding: 1px;
		border: 1px solid #c4d8f4;
		background: #fff;
		color: #000;
	}

	.combo select {
		flex: 1;
		min-width: 0;
		padding: 0 0 2px 4px;
		appearance: none;
		opacity: 1;
	}

	.combo__button {
		display: flex;
		align-items: center;
		justify-content: center;
		box-sizing: border-box;
		width: 19px;
		height: 21px;
		border: 1px solid #7fa5dc;
		background: linear-gradient(#dcebff, #a9cdfb);
	}

	.combo__button::after {
		content: '';
		border: solid transparent;
		border-width: 4px 4px 0;
		border-top-color: #1f4a96;
	}

	.combo--kind {
		width: 116px;
		margin-right: 13px;
	}

	.combo--disabled {
		background: #efefef;
		color: #a5a5a5;
	}

	.combo--disabled .combo__button {
		background: #e2edfb;
	}

	.combo--disabled .combo__button::after {
		border-top-color: #9a9a9a;
	}

	.group {
		display: flex;
		align-items: center;
		gap: 9px;
		box-sizing: border-box;
		height: 33px;
		border: 1px solid #d3dbe6;
		color: #000;
	}

	.group--status {
		width: 429px;
		margin-right: 5px;
		padding-left: 10px;
	}

	.group--status .caption {
		width: 34px;
	}

	.group--item {
		width: 255px;
		padding-left: 8px;
		gap: 7px;
	}

	.group--item .caption {
		width: 66px;
	}

	.radio {
		display: flex;
		align-items: center;
		gap: 6px;
		color: #000;
	}

	.radio input {
		appearance: none;
		width: 16px;
		height: 16px;
		border: 1px solid #858585;
		border-radius: 50%;
		background: #f3f3f3;
	}

	.radio input:checked {
		border: 5px solid #0a5fb8;
		background: #fff;
	}

	.check {
		display: flex;
		align-items: center;
		gap: 6px;
		color: var(--blue);
	}

	.check input {
		display: grid;
		place-items: center;
		appearance: none;
		width: 15px;
		height: 15px;
		border: 1px solid #a9bacf;
		outline: 1px solid #dfe6ef;
		outline-offset: -3px;
		background: #cdd3da;
	}

	.check input:checked::after {
		content: '';
		width: 4px;
		height: 8px;
		border: solid #4e6a9a;
		border-width: 0 2px 2px 0;
		transform: rotate(40deg);
	}

	/* workspace */
	.body {
		flex: 1;
		min-height: 0;
		display: grid;
		grid-template-columns: 280px 8px 1fr;
		margin-right: 4px;
		border-right: 1px solid var(--line);
	}

	.sidebar {
		display: flex;
		flex-direction: column;
		min-height: 0;
		border-right: 1px solid #9aa3b3;
		background: #fff;
		overflow: hidden;
	}

	.search {
		flex: none;
		display: flex;
		align-items: center;
		box-sizing: border-box;
		height: 33px;
		padding-bottom: 3px;
		border-bottom: 1px solid #8a9fc4;
		background: var(--bar);
		color: var(--blue);
	}

	.search > label:first-child {
		width: 38px;
		margin-left: -8px;
	}

	.search .box {
		width: 81px;
		margin-right: 5px;
	}

	.push {
		display: grid;
		place-items: center;
		width: 29px;
		height: 28px;
		margin-right: 5px;
		border: 1px solid #8fb0e0;
		border-radius: 3px;
		background: linear-gradient(#dceaff, #b2d2fd);
	}

	.push svg {
		width: 20px;
		height: 20px;
	}

	.patients {
		flex: 1;
		min-height: 0;
		overflow: hidden;
		padding-top: 2px;
	}

	.patients__root {
		display: flex;
		align-items: center;
		height: 20px;
		padding-left: 1px;
	}

	.toggle {
		display: grid;
		place-items: center;
		box-sizing: border-box;
		flex: none;
		width: 11px;
		height: 11px;
		border: 1px solid #9b9b9b;
		border-radius: 2px;
		background: #f7f7f7;
		color: #2f55a5;
		font: bold 11px/9px 'Liberation Sans', sans-serif;
	}

	.dots {
		flex: none;
		width: 8px;
		height: 0;
		border-top: 1px dotted #999;
	}

	.ward {
		width: 20px;
		height: 20px;
		margin-right: 5px;
	}

	.patients ul {
		margin-left: 30px;
	}

	.patients li {
		display: flex;
		align-items: center;
		height: 20px;
	}

	.branch {
		align-self: flex-start;
		box-sizing: border-box;
		width: 13px;
		height: 20px;
		margin: -10px 2px 0 0;
		border: dotted #999;
		border-width: 0 0 1px 1px;
	}

	.person {
		width: 18px;
		height: 18px;
		margin-right: 5px;
	}

	.patients li span {
		padding: 0 3px 0 1px;
	}

	.current {
		background: #efefef;
	}

	.sidebar__foot {
		flex: none;
		display: flex;
		align-items: center;
		gap: 1px;
		box-sizing: border-box;
		height: 29px;
		border-top: 2px solid #9aa3b3;
		border-bottom: 2px solid #7ba2da;
		background: var(--bar);
	}

	.combo--bed {
		width: 91px;
		margin-left: -12px;
	}

	.combo--ward {
		width: 157px;
	}

	.split {
		display: flex;
		align-items: center;
		justify-content: center;
		gap: 10px;
	}

	.split i {
		border: 4px solid transparent;
	}

	.split--v {
		flex-direction: column;
		background: linear-gradient(90deg, #d9e8fc, #8db4ea 70%, #6c98d6);
	}

	.split--v i {
		border-width: 4px 5px 4px 0;
		border-right-color: #17305f;
	}

	.split--v b {
		width: 3px;
		height: 44px;
		background: repeating-linear-gradient(#17305f 0 3px, transparent 3px 5px);
	}

	.split--h {
		flex: none;
		height: 8px;
		background: linear-gradient(#c9dcf5, #6f9ad4);
	}

	.split--h i {
		border-width: 5px 5px 0;
		border-top-color: #17305f;
	}

	.split--h b {
		width: 44px;
		height: 3px;
		background: repeating-linear-gradient(90deg, #17305f 0 3px, transparent 3px 5px);
	}

	.work {
		display: flex;
		flex-direction: column;
		min-width: 0;
		min-height: 0;
	}

	.charges {
		flex: 1;
		min-height: 0;
		border: 1px solid #10131a;
		background: #fff;
	}

	/* data grids */
	.grid {
		table-layout: fixed;
		width: 0;
		border-collapse: separate;
		border-spacing: 0;
	}

	.grid th,
	.grid td {
		box-sizing: border-box;
		padding: 0 3px 2px;
		overflow: hidden;
		text-align: left;
		font-weight: normal;
		white-space: pre;
	}

	.grid th {
		padding-left: 7px;
		border: solid #a4bcd8;
		border-width: 0 1px 1px 0;
		background: linear-gradient(#f7fafc, #d4dbe8);
		line-height: 15px;
	}

	.grid th.center {
		padding: 0 22px 2px 0;
		text-align: center;
	}

	.grid th.tight {
		padding: 0 0 2px;
		text-align: center;
	}

	.grid th.active {
		border-color: #f3983c;
		background: linear-gradient(#f9d99f, #efc060);
	}

	.grid th.select {
		background: #a9c5ee;
	}

	.grid td {
		border: solid #d0d8e8;
		border-width: 0 1px 1px 0;
		background: #fff;
		line-height: 15px;
	}

	.grid .selected td {
		border-right: 0;
		background:
			radial-gradient(ellipse 60% 40% at 50% 100%, #ffeb9a, transparent),
			linear-gradient(#f9d9b4, #fdc98a 34%, #ffb257 38%, #ffca78 65%, #ffe38e);
	}

	.grid--charge th {
		height: 40px;
	}

	.grid--charge td {
		height: 28px;
		padding: 0;
	}

	.grid--charge .selected td.editor {
		border-right: 1px solid #d0d8e8;
		background: #fff;
	}

	.combo--cell {
		height: 26px;
		margin-right: 1px;
		padding: 0;
		border-color: #d5d5d5;
	}

	.combo--cell .combo__button {
		width: 20px;
		height: 24px;
		border: 0;
		border-left: 1px solid #ccc;
		background: #fff;
	}

	.combo--cell .combo__button::after {
		width: 6px;
		height: 6px;
		margin-top: -4px;
		border: solid #777;
		border-width: 0 1px 1px 0;
		transform: rotate(45deg);
	}

	.date {
		display: block;
		width: 120px;
		height: 25px;
		margin-left: 3px;
		padding: 0 0 4px 18px;
		background: #fff;
		white-space: pre;
	}

	.grid--lower th {
		height: 25px;
	}

	.grid--lower td {
		height: 29px;
	}

	.grid--lower tr:nth-child(4n) td {
		height: 28px;
	}

	.grid--item th {
		height: 25px;
	}

	.grid--item td,
	.grid--compare td {
		height: 19px;
		padding: 0 2px 2px;
	}

	.grid--item tr:nth-child(4n) td {
		height: 18px;
	}

	.grid--item td:first-child,
	.grid--compare td:first-child {
		border-color: #9db9de;
		background: #e3ecf8;
	}

	.grid--item .selected td:first-child,
	.grid--compare tr:first-child td:first-child {
		border-color: #f3983c;
		background: #ffd083;
	}

	.grid--compare th {
		height: 31px;
	}

	.grid--compare th:nth-child(3) {
		color: #8b008b;
	}

	.grid--compare td:nth-child(2) {
		text-align: center;
	}

	.grid--compare td:nth-child(3),
	.grid--compare td:nth-child(4) {
		padding-right: 5px;
		text-align: right;
	}

	/* scroll areas */
	.scroller {
		flex: 1;
		min-height: 0;
		display: grid;
		grid-template: 1fr 20px / 1fr 20px;
		border: 1px solid #10131a;
		background: #fff;
	}

	.scroller--tall {
		grid-template-rows: 1fr;
	}

	.scroller__view {
		min-width: 0;
		min-height: 0;
		overflow: hidden;
	}

	.vscroll,
	.hscroll {
		display: flex;
		min-height: 0;
		background: linear-gradient(90deg, #94afd3, #7a9ac3);
	}

	.vscroll {
		flex-direction: column;
	}

	.hscroll {
		background: linear-gradient(#94afd3, #7a9ac3);
	}

	.corner {
		background: #7f9ec6;
	}

	.arrow {
		flex: none;
		display: grid;
		place-items: center;
		width: 21px;
		height: 20px;
	}

	.vscroll .arrow {
		width: 20px;
		height: 22px;
	}

	.arrow::after {
		content: '';
		border: 6px solid transparent;
	}

	.arrow--up::after {
		border-width: 0 6px 7px;
		border-bottom-color: #51658c;
	}

	.arrow--down {
		margin-top: auto;
	}

	.arrow--down::after {
		border-width: 7px 6px 0;
		border-top-color: #51658c;
	}

	.arrow--left::after {
		border-width: 6px 7px 6px 0;
		border-right-color: #51658c;
	}

	.arrow--right {
		margin-left: auto;
	}

	.arrow--right::after {
		border-width: 6px 0 6px 7px;
		border-left-color: #51658c;
	}

	.thumb {
		flex: none;
		display: grid;
		place-items: center;
		box-sizing: border-box;
		border: 1px solid #5f7499;
		border-radius: 2px;
	}

	.thumb--v {
		background: linear-gradient(90deg, #e6ebf0 45%, #bccbdc 50%, #d3dde8);
	}

	.thumb--h {
		background: linear-gradient(#e3e8ee 45%, #b7c7d9 50%, #cfdae6);
	}

	.thumb--v i {
		width: 12px;
		height: 10px;
		background: repeating-linear-gradient(#8c98a8 0 1px, transparent 1px 3px);
	}

	.thumb--h i {
		width: 10px;
		height: 12px;
		background: repeating-linear-gradient(90deg, #8c98a8 0 1px, transparent 1px 3px);
	}

	/* lower panes */
	.lower {
		flex: none;
		display: flex;
		height: 272px;
	}

	.pane {
		display: flex;
		flex-direction: column;
		min-width: 0;
		border-bottom: 1px solid #7ba2da;
	}

	.pane--main {
		width: 410px;
		flex: none;
	}

	.pane--extra {
		flex: 1;
	}

	.pane__bar {
		flex: none;
		display: flex;
		align-items: center;
		gap: 12px;
		box-sizing: border-box;
		height: 27px;
		padding: 0 0 2px 7px;
		border-left: 1px solid var(--line);
		border-bottom: 1px solid var(--line);
		background: var(--bar);
	}

	.pane__bar .caption {
		width: 34px;
	}

	.pane--extra .pane__bar {
		gap: 9px;
	}

	.pane--extra .caption {
		width: 36px;
	}

	.pane__buttons {
		display: flex;
		gap: 4px;
		margin-left: 4px;
	}

	.button {
		width: 78px;
		height: 28px;
		padding-bottom: 2px;
		border: 1px solid #86a5d8;
		border-radius: 3px;
		background: linear-gradient(#dbe9ff, #c8deff 48%, #a9cfff 52%, #c6deff);
		color: var(--blue);
		box-shadow: inset 0 0 0 1px #cfe0fa;
	}

	.button--small {
		width: 56px;
		height: 24px;
	}

	.button--wide {
		width: 94px;
	}

	.taskbar {
		flex: none;
		box-sizing: border-box;
		height: 12px;
		border-top: 2px solid #f2f4f8;
		background: #d6e1ea;
	}

	/* item picker window */
	.dialog {
		position: absolute;
		left: 621px;
		top: 344px;
		display: flex;
		flex-direction: column;
		box-sizing: border-box;
		width: 890px;
		height: 605px;
		border: 1px solid #8f959e;
		border-radius: 10px;
		background: #fff;
		overflow: hidden;
		box-shadow: 0 24px 44px rgba(0, 0, 0, 0.34), 0 0 16px rgba(0, 0, 0, 0.12);
	}

	.dialog__title {
		flex: none;
		display: flex;
		align-items: center;
		box-sizing: border-box;
		height: 38px;
		padding: 0 14px 2px 10px;
		gap: 6px;
		font-family: var(--sans);
	}

	.dialog__title button {
		margin-left: auto;
	}

	.dialog__title button svg {
		width: 14px;
		height: 14px;
	}

	.dialog__body {
		flex: 1;
		min-height: 0;
		display: grid;
		grid-template-columns: 200px 1fr;
		border-top: 1px solid #5f92d4;
	}

	.dialog__left,
	.dialog__right {
		display: flex;
		flex-direction: column;
		min-width: 0;
		min-height: 0;
	}

	.dialog__right {
		border-left: 1px solid var(--line);
	}

	.dialog__bar {
		flex: none;
		display: flex;
		align-items: center;
		box-sizing: border-box;
		height: 42px;
		padding: 4px 0 0 9px;
		border-bottom: 1px solid #56779f;
		background: linear-gradient(#deebff, #b0d0ff);
		color: var(--blue);
	}

	.dialog__bar--left {
		padding: 0 0 2px 32px;
	}

	.box--query {
		width: 98px;
		margin-right: 8px;
	}

	.combo--code {
		width: 94px;
		margin-right: 8px;
	}

	.combo--match {
		width: 106px;
		margin-right: 11px;
	}

	.check--habit {
		margin-right: 9px;
	}

	.caption--price {
		width: 45px;
	}

	.caption--ratio {
		width: 67px;
		margin-left: 9px;
	}

	.tree {
		flex: 1;
		min-height: 0;
		display: grid;
		grid-template: 1fr 22px / 1fr 21px;
		background: #f0f0f0;
	}

	.tree ul {
		min-height: 0;
		overflow: hidden;
		padding-top: 2px;
		background: #fff;
	}

	.tree li {
		display: flex;
		align-items: center;
		height: 17px;
		line-height: 17px;
	}

	.tree li:nth-child(even) {
		height: 18px;
	}

	.tree .dots {
		margin-right: 1px;
	}

	.tree__root {
		padding-left: 11px;
	}

	.tree__branch {
		padding-left: 35px;
	}

	.tree__leaf {
		padding-left: 59px;
		background:
			repeating-linear-gradient(#999 0 1px, transparent 1px 3px) 40px 0 / 1px 100% no-repeat,
			repeating-linear-gradient(#999 0 1px, transparent 1px 3px) 64px 0 / 1px 100% no-repeat;
	}

	.tree__vbar {
		padding: 22px 0 0 8px;
	}

	.tree__vbar i {
		display: block;
		width: 3px;
		height: 45px;
		background: #8b8b8b;
	}

	.tree__hbar {
		padding: 9px 0 0 23px;
	}

	.tree__hbar i {
		display: block;
		width: 50px;
		height: 3px;
		background: #8b8b8b;
	}

	.scroller--items {
		flex: none;
		height: 339px;
		border-bottom-width: 2px;
	}

	.scroller--compare {
		flex: none;
		height: 95px;
	}

	.dialog__foot {
		flex: 1;
		display: flex;
		flex-direction: column;
		align-items: flex-start;
		gap: 19px;
		background: linear-gradient(#deebff, #b0d0ff);
	}

	.dialog__buttons {
		align-self: stretch;
		display: flex;
		justify-content: flex-end;
		gap: 7px;
		padding: 3px 5px 0 0;
	}

	.dialog__foot strong {
		margin-left: 157px;
		color: #0000f0;
		font-size: 16px;
	}

	/* review marks laid over the screen */
	.marks {
		position: absolute;
		left: 0;
		top: 0;
		width: 2146px;
		height: 1350px;
		fill: #ff3838;
		pointer-events: none;
	}

	.note {
		position: absolute;
		left: 1610px;
		top: 534px;
		margin: 0;
		color: #ff3030;
		font: 20px/28px 'Noto Sans CJK SC', sans-serif;
	}

	.gauge {
		position: absolute;
		right: 0;
		top: 676px;
		box-sizing: border-box;
		width: 13px;
		height: 74px;
		padding: 35px 3px 0 4px;
		border-radius: 5px 0 0 5px;
		background: repeating-linear-gradient(#4cae4f 0 2px, #454b52 2px 4px) content-box, #454b52;
	}
</style>
